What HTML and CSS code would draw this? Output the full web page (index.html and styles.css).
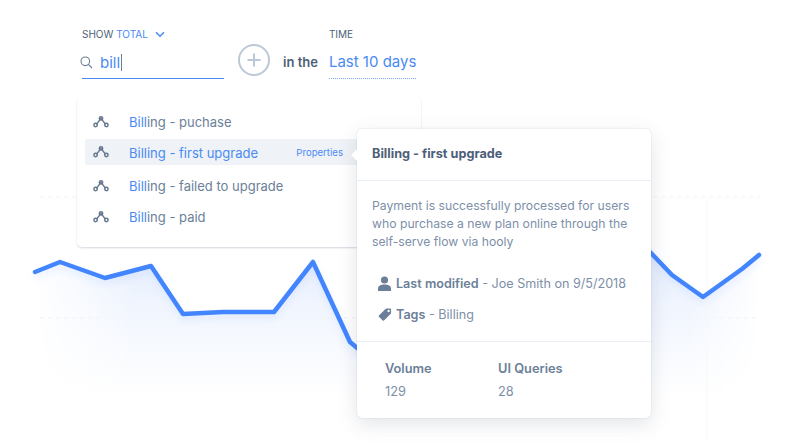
FILE: index.html
```html
<!DOCTYPE html>
<html lang="en">
<head>
  <meta charset="UTF-8">
  <title>Events</title>
  <link rel="stylesheet" href="styles.css">
</head>
<body>
  <div class="stage">
    <!-- Chart behind everything -->
    <svg class="chart" width="804" height="448" viewBox="0 0 804 448">
      <defs>
        <linearGradient id="areaFill" x1="0" y1="0" x2="0" y2="1">
          <stop offset="0" stop-color="#dfe9fd"/>
          <stop offset="0.45" stop-color="#f0f5fe"/>
          <stop offset="1" stop-color="#ffffff"/>
        </linearGradient>
        <linearGradient id="sideFade" x1="0" y1="0" x2="1" y2="0">
          <stop offset="0" stop-color="#000"/>
          <stop offset="0.07" stop-color="#777"/>
          <stop offset="0.14" stop-color="#fff"/>
          <stop offset="0.9" stop-color="#fff"/>
          <stop offset="1" stop-color="#000"/>
        </linearGradient>
        <mask id="sideMask" maskUnits="userSpaceOnUse" x="0" y="0" width="804" height="448">
          <rect x="34" y="0" width="726" height="448" fill="url(#sideFade)"/>
        </mask>
        <filter id="lineShadow" x="-5%" y="-20%" width="110%" height="140%">
          <feDropShadow dx="0" dy="4" stdDeviation="3" flood-color="#4285ff" flood-opacity="0.12"/>
        </filter>
      </defs>
      <path class="area" mask="url(#sideMask)" d="M35 272L60 262L105 278L151 266L183 314L223 312L274 312L313 262L350 342L400 380L620 230L651 253L672 275L703 297L742 269L759 255V395H35Z"/>
      <path class="grid" d="M40 197H77M421 197H760M40 318H760"/>
      <path class="grid-v" d="M707 200V440"/>
      <path class="line" filter="url(#lineShadow)" d="M35 272L60 262L105 278L151 266L183 314L223 312L274 312L313 262L350 342L362 352M640 242L651 253L672 275L703 297L742 269L759 255"/>
    </svg>

    <!-- Query controls -->
    <div class="controls">
      <div class="field">
        <div class="label">SHOW <span class="accent">TOTAL</span>
          <svg class="chevron" width="10" height="7" viewBox="0 0 10 7"><path d="M1 1.2L5 5.2L9 1.2"/></svg>
        </div>
        <div class="search">
          <svg class="search-icon" width="13" height="13" viewBox="0 0 13 13"><circle cx="5.3" cy="5.3" r="4.3"/><path d="M8.5 8.5L12 12"/></svg>
          <span class="typed">bill</span><span class="cursor"></span>
        </div>
      </div>
      <button class="add">
        <svg width="32" height="32" viewBox="0 0 32 32"><circle cx="16" cy="16" r="15"/><path d="M16 9.5V22.5M9.5 16H22.5"/></svg>
      </button>
      <span class="joiner">in the</span>
      <div class="field">
        <div class="label">TIME</div>
        <div class="range">Last 10 days</div>
      </div>
    </div>

    <!-- Search results -->
    <ul class="results">
      <li class="result">
        <svg class="node" width="16" height="14" viewBox="0 0 16 14"><path d="M3.4 9.4L8 3.4L12.6 9.4"/><circle cx="8" cy="3.4" r="1.7"/><circle cx="2.6" cy="10" r="1.7"/><circle cx="13.4" cy="10" r="1.7"/></svg>
        <span><span class="accent">Bill</span>ing - puchase</span>
      </li>
      <li class="result selected">
        <svg class="node" width="16" height="14" viewBox="0 0 16 14"><path d="M3.4 9.4L8 3.4L12.6 9.4"/><circle cx="8" cy="3.4" r="1.7"/><circle cx="2.6" cy="10" r="1.7"/><circle cx="13.4" cy="10" r="1.7"/></svg>
        <span class="accent">Billing - first upgrade</span>
        <span class="props">Properties</span>
      </li>
      <li class="result">
        <svg class="node" width="16" height="14" viewBox="0 0 16 14"><path d="M3.4 9.4L8 3.4L12.6 9.4"/><circle cx="8" cy="3.4" r="1.7"/><circle cx="2.6" cy="10" r="1.7"/><circle cx="13.4" cy="10" r="1.7"/></svg>
        <span><span class="accent">Bill</span>ing - failed to upgrade</span>
      </li>
      <li class="result">
        <svg class="node" width="16" height="14" viewBox="0 0 16 14"><path d="M3.4 9.4L8 3.4L12.6 9.4"/><circle cx="8" cy="3.4" r="1.7"/><circle cx="2.6" cy="10" r="1.7"/><circle cx="13.4" cy="10" r="1.7"/></svg>
        <span><span class="accent">Bill</span>ing - paid</span>
      </li>
    </ul>

    <!-- Details popover -->
    <div class="popover">
      <div class="pop-title">Billing - first upgrade</div>
      <div class="pop-body">
        <p class="desc">Payment is successfully processed for users who purchase a new plan online through the self-serve flow via hooly</p>
        <div class="meta first">
          <svg class="meta-icon" width="14" height="15" viewBox="0 0 14 15"><circle cx="6.5" cy="4" r="3.6"/><path d="M0 15V12.5C0 9.8 3 8.6 6.5 8.6S13 9.8 13 12.5V15Z"/></svg>
          <span><b>Last modified</b> - Joe Smith on 9/5/2018</span>
        </div>
        <div class="meta">
          <svg class="meta-icon" width="14" height="15" viewBox="0 0 15 15"><path d="M1 8.6L8 1.6C8.4 1.2 8.8 1 9.4 1H13C13.6 1 14 1.4 14 2V5.6C14 6.2 13.8 6.6 13.4 7L6.4 14C6 14.4 5.4 14.4 5 14L1 10C0.6 9.6 0.6 9 1 8.6ZM11.4 5A1.3 1.3 0 1 0 11.4 2.4A1.3 1.3 0 1 0 11.4 5Z" fill-rule="evenodd"/></svg>
          <span><b>Tags</b> - Billing</span>
        </div>
      </div>
      <div class="pop-stats">
        <div class="stat">
          <b>Volume</b>
          <span>129</span>
        </div>
        <div class="stat">
          <b>UI Queries</b>
          <span>28</span>
        </div>
      </div>
    </div>
  </div>
</body>
</html>
```

FILE: styles.css
```css
/* Page */
body {
  margin: 0;
  background: #fff;
  font-family: Inter, "Liberation Sans", sans-serif;
  color: #6b7f99;
}

.stage {
  position: relative;
  width: 804px;
  height: 448px;
  overflow: hidden;
}

.accent {
  color: #4a8af4;
}

/* Chart in the background */
.chart {
  position: absolute;
  top: 0;
  left: 0;
}

.area {
  fill: url(#areaFill);
}

.grid {
  fill: none;
  stroke: #f1f3f7;
  stroke-width: 1;
  stroke-dasharray: 4 4;
}

.grid-v {
  fill: none;
  stroke: #f7f8fa;
  stroke-width: 1;
}

.line {
  fill: none;
  stroke: #4285ff;
  stroke-width: 4.5;
  stroke-linecap: round;
  stroke-linejoin: round;
}

/* Query controls */
.controls {
  position: relative;
  display: flex;
  align-items: flex-end;
  height: 51px;
  padding: 28px 0 0 82px;
}

.label {
  height: 12px;
  font-size: 10px;
  line-height: 12px;
  color: #4d5f78;
}

.chevron {
  margin-left: 4px;
  fill: none;
  stroke: #4a8af4;
  stroke-width: 1.6;
}

.search {
  box-sizing: border-box;
  display: flex;
  align-items: center;
  width: 142px;
  height: 30px;
  margin-top: 9px;
  padding-bottom: 3px;
  border-bottom: 1px solid #4a8af4;
  font-size: 15px;
}

.search-icon {
  flex: none;
  margin: 0 7px 0 -2px;
  fill: none;
  stroke: #6b7f99;
  stroke-width: 1.1;
}

.typed {
  color: #4a8af4;
}

.cursor {
  width: 1px;
  height: 17px;
  margin-left: 1px;
  background: #6b7f99;
}

.add {
  align-self: flex-end;
  width: 32px;
  height: 32px;
  margin: 0 13px 3px 14px;
  padding: 0;
  border: 0;
  background: none;
}

.add svg {
  display: block;
  fill: #fff;
  stroke: #bcc8d6;
  stroke-width: 2;
}

.joiner {
  margin-right: 11px;
  padding-bottom: 9px;
  font-size: 13px;
  line-height: 16px;
  font-weight: 600;
  color: #4d5f78;
}

.range {
  box-sizing: border-box;
  height: 30px;
  margin-top: 9px;
  padding-top: 1px;
  border-bottom: 1px dotted #7aa8f6;
  font-size: 15px;
  line-height: 24px;
  color: #4a8af4;
}

/* Search results */
.results {
  position: relative;
  box-sizing: border-box;
  display: flex;
  flex-direction: column;
  gap: 5px;
  width: 344px;
  height: 150px;
  margin: 18px 0 0 77px;
  padding: 12px 8px 0;
  list-style: none;
  background: #fff;
  border-radius: 5px;
  box-shadow: 0 1px 2px rgba(80, 95, 120, 0.25);
  font-size: 13px;
}

.result {
  display: flex;
  align-items: center;
  height: 26px;
  padding-right: 70px;
  border-radius: 3px;
}

.result.selected {
  margin: -1px 0 3px;
  padding-top: 1px;
  box-sizing: border-box;
  background: #eff2f6;
}

.node {
  flex: none;
  margin: -1px 20px 0 8px;
  fill: none;
  stroke: #66788f;
  stroke-width: 1.5;
}

.props {
  margin-left: auto;
  font-size: 9.6px;
  color: #4a8af4;
}

/* Details popover */
.popover {
  position: absolute;
  top: 129px;
  left: 357px;
  box-sizing: border-box;
  width: 294px;
  height: 289px;
  background: #fff;
  border-radius: 5px;
  box-shadow: 0 0 2px rgba(80, 95, 120, 0.2), 0 6px 20px rgba(80, 95, 120, 0.16);
  font-size: 12.2px;
}

.popover::before {
  content: "";
  position: absolute;
  top: 20px;
  left: -6px;
  border-top: 6px solid transparent;
  border-bottom: 6px solid transparent;
  border-right: 6px solid #fff;
}

.pop-title {
  height: 51px;
  padding-left: 15px;
  border-bottom: 1px solid #e9edf4;
  font-size: 12.7px;
  font-weight: 700;
  line-height: 49px;
  color: #4d5f78;
}

.pop-body {
  box-sizing: border-box;
  height: 161px;
  padding: 16px 15px 0;
  border-bottom: 1px solid #e9edf4;
}

.desc {
  margin: 0;
  line-height: 18px;
  color: #7d8fa8;
}

.meta {
  display: flex;
  align-items: center;
  gap: 4px;
  height: 20px;
  margin-top: 11px;
  padding-left: 6px;
  font-size: 12.6px;
  color: #7d8fa8;
}

.meta.first {
  margin-top: 22px;
}

.meta b,
.stat b {
  font-weight: 600;
  color: #6b7f99;
}

.meta-icon {
  flex: none;
  fill: #6b7f99;
}

.pop-stats {
  display: flex;
  padding: 19px 0 0 28px;
}

.stat {
  display: flex;
  flex-direction: column;
  gap: 8px;
  width: 113px;
  font-size: 12.8px;
  line-height: 15px;
  color: #7d8fa8;
}
```
